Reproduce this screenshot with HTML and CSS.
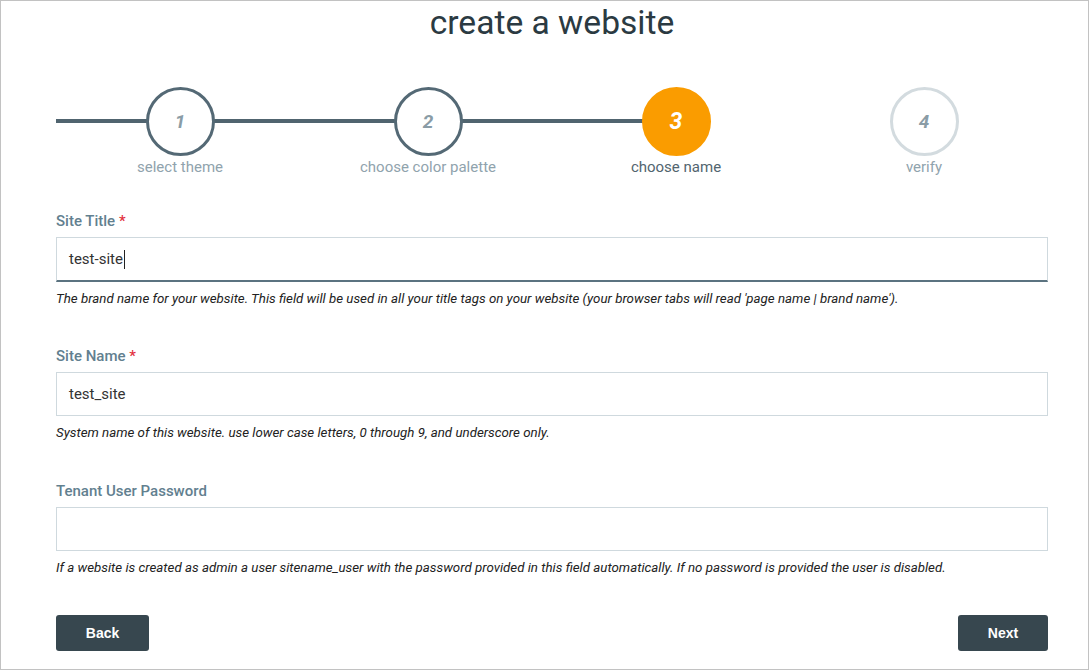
FILE: index.html
```html
<!DOCTYPE html>
<html>
<head>
<meta charset="utf-8">
<link rel="stylesheet" href="styles.css">
</head>
<body>
<div class="frame">
  <div class="content">
    <h1 class="title">create a website</h1>
    <div class="stepper">
      <div class="track"></div>
      <div class="step done">
        <div class="circle">1</div>
        <div class="label">select theme</div>
      </div>
      <div class="step done">
        <div class="circle">2</div>
        <div class="label">choose color palette</div>
      </div>
      <div class="step active">
        <div class="circle">3</div>
        <div class="label">choose name</div>
      </div>
      <div class="step todo">
        <div class="circle">4</div>
        <div class="label">verify</div>
      </div>
    </div>

    <div class="field">
      <label class="flabel">Site Title <span class="req">*</span></label>
      <div class="input focused"><span>test-site</span><span class="caret"></span></div>
      <p class="help">The brand name for your website. This field will be used in all your title tags on your website (your browser tabs will read 'page name | brand name').</p>
    </div>
    <div class="field">
      <label class="flabel">Site Name <span class="req">*</span></label>
      <div class="input"><span>test_site</span></div>
      <p class="help">System name of this website. use lower case letters, 0 through 9, and underscore only.</p>
    </div>
    <div class="field">
      <label class="flabel">Tenant User Password</label>
      <div class="input"></div>
      <p class="help">If a website is created as admin a user sitename_user with the password provided in this field automatically. If no password is provided the user is disabled.</p>
    </div>

    <div class="actions">
      <button class="btn back">Back</button>
      <button class="btn next">Next</button>
    </div>
  </div>
</div>
</body>
</html>
```
FILE: styles.css
```css
* { box-sizing: border-box; }
html, body { margin: 0; padding: 0; background: #fff; }
body { font-family: Roboto, "Liberation Sans", sans-serif; }
.frame {
  width: 1089px;
  height: 670px;
  border: 1px solid #c2c2c2;
  overflow: hidden;
}
.content {
  width: 992px;
  margin-left: 55px;
}
.title {
  margin: 0;
  padding-top: 3px;
  text-align: center;
  font-weight: 400;
  font-size: 33.6px;
  line-height: 38px;
  color: #2b3a42;
}
.stepper {
  position: relative;
  display: grid;
  grid-template-columns: repeat(4, 1fr);
  margin-top: 45px;
}
.track {
  position: absolute;
  left: 0;
  top: 32px;
  width: 621px;
  height: 4px;
  background: #50646f;
}
.step {
  position: relative;
  display: flex;
  flex-direction: column;
  align-items: center;
}
.circle {
  width: 69px;
  height: 69px;
  border-radius: 50%;
  background: #fff;
  border: 3px solid #546975;
  display: flex;
  align-items: center;
  justify-content: center;
  font-style: italic;
  font-weight: 700;
  font-size: 19px;
  color: #8a9ca6;
}
.step.active .circle {
  background: #fa9c00;
  border-color: #fa9c00;
  color: #fff;
  font-size: 23px;
}
.step.todo .circle { border-color: #d3dbdf; }
.label {
  margin-top: 1px;
  font-size: 15px;
  line-height: 20px;
  color: #90a3ad;
}
.step.active .label { color: #52656f; }

.field { margin-top: 39px; }
.stepper + .field { margin-top: 35px; }
.field + .field + .field { margin-top: 40px; }
.flabel {
  display: block;
  font-size: 15px;
  font-weight: 500;
  line-height: 18px;
  color: #62808f;
  margin-bottom: 7px;
}
.req { color: #e2323f; }
.input {
  height: 44px;
  border: 1px solid #cfd9de;
  display: flex;
  align-items: center;
  padding-left: 12px;
  font-size: 15px;
  color: #333;
}
.input.focused { height: 45px; border-bottom: 2px solid #5b7380; }
.caret {
  display: inline-block;
  width: 1px;
  height: 19px;
  background: #222;
  margin-left: 1px;
}
.help {
  margin: 8px 0 0;
  font-size: 13.3px;
  line-height: 18px;
  font-style: italic;
  color: #222;
}
.actions {
  display: flex;
  justify-content: space-between;
  margin-top: 38px;
}
.btn {
  height: 36px;
  border: none;
  border-radius: 3px;
  background: #37474f;
  color: #fff;
  font-family: "Liberation Sans", Arial, sans-serif;
  font-weight: 700;
  font-size: 14px;
}
.btn.back { width: 93px; }
.btn.next { width: 90px; }
```
